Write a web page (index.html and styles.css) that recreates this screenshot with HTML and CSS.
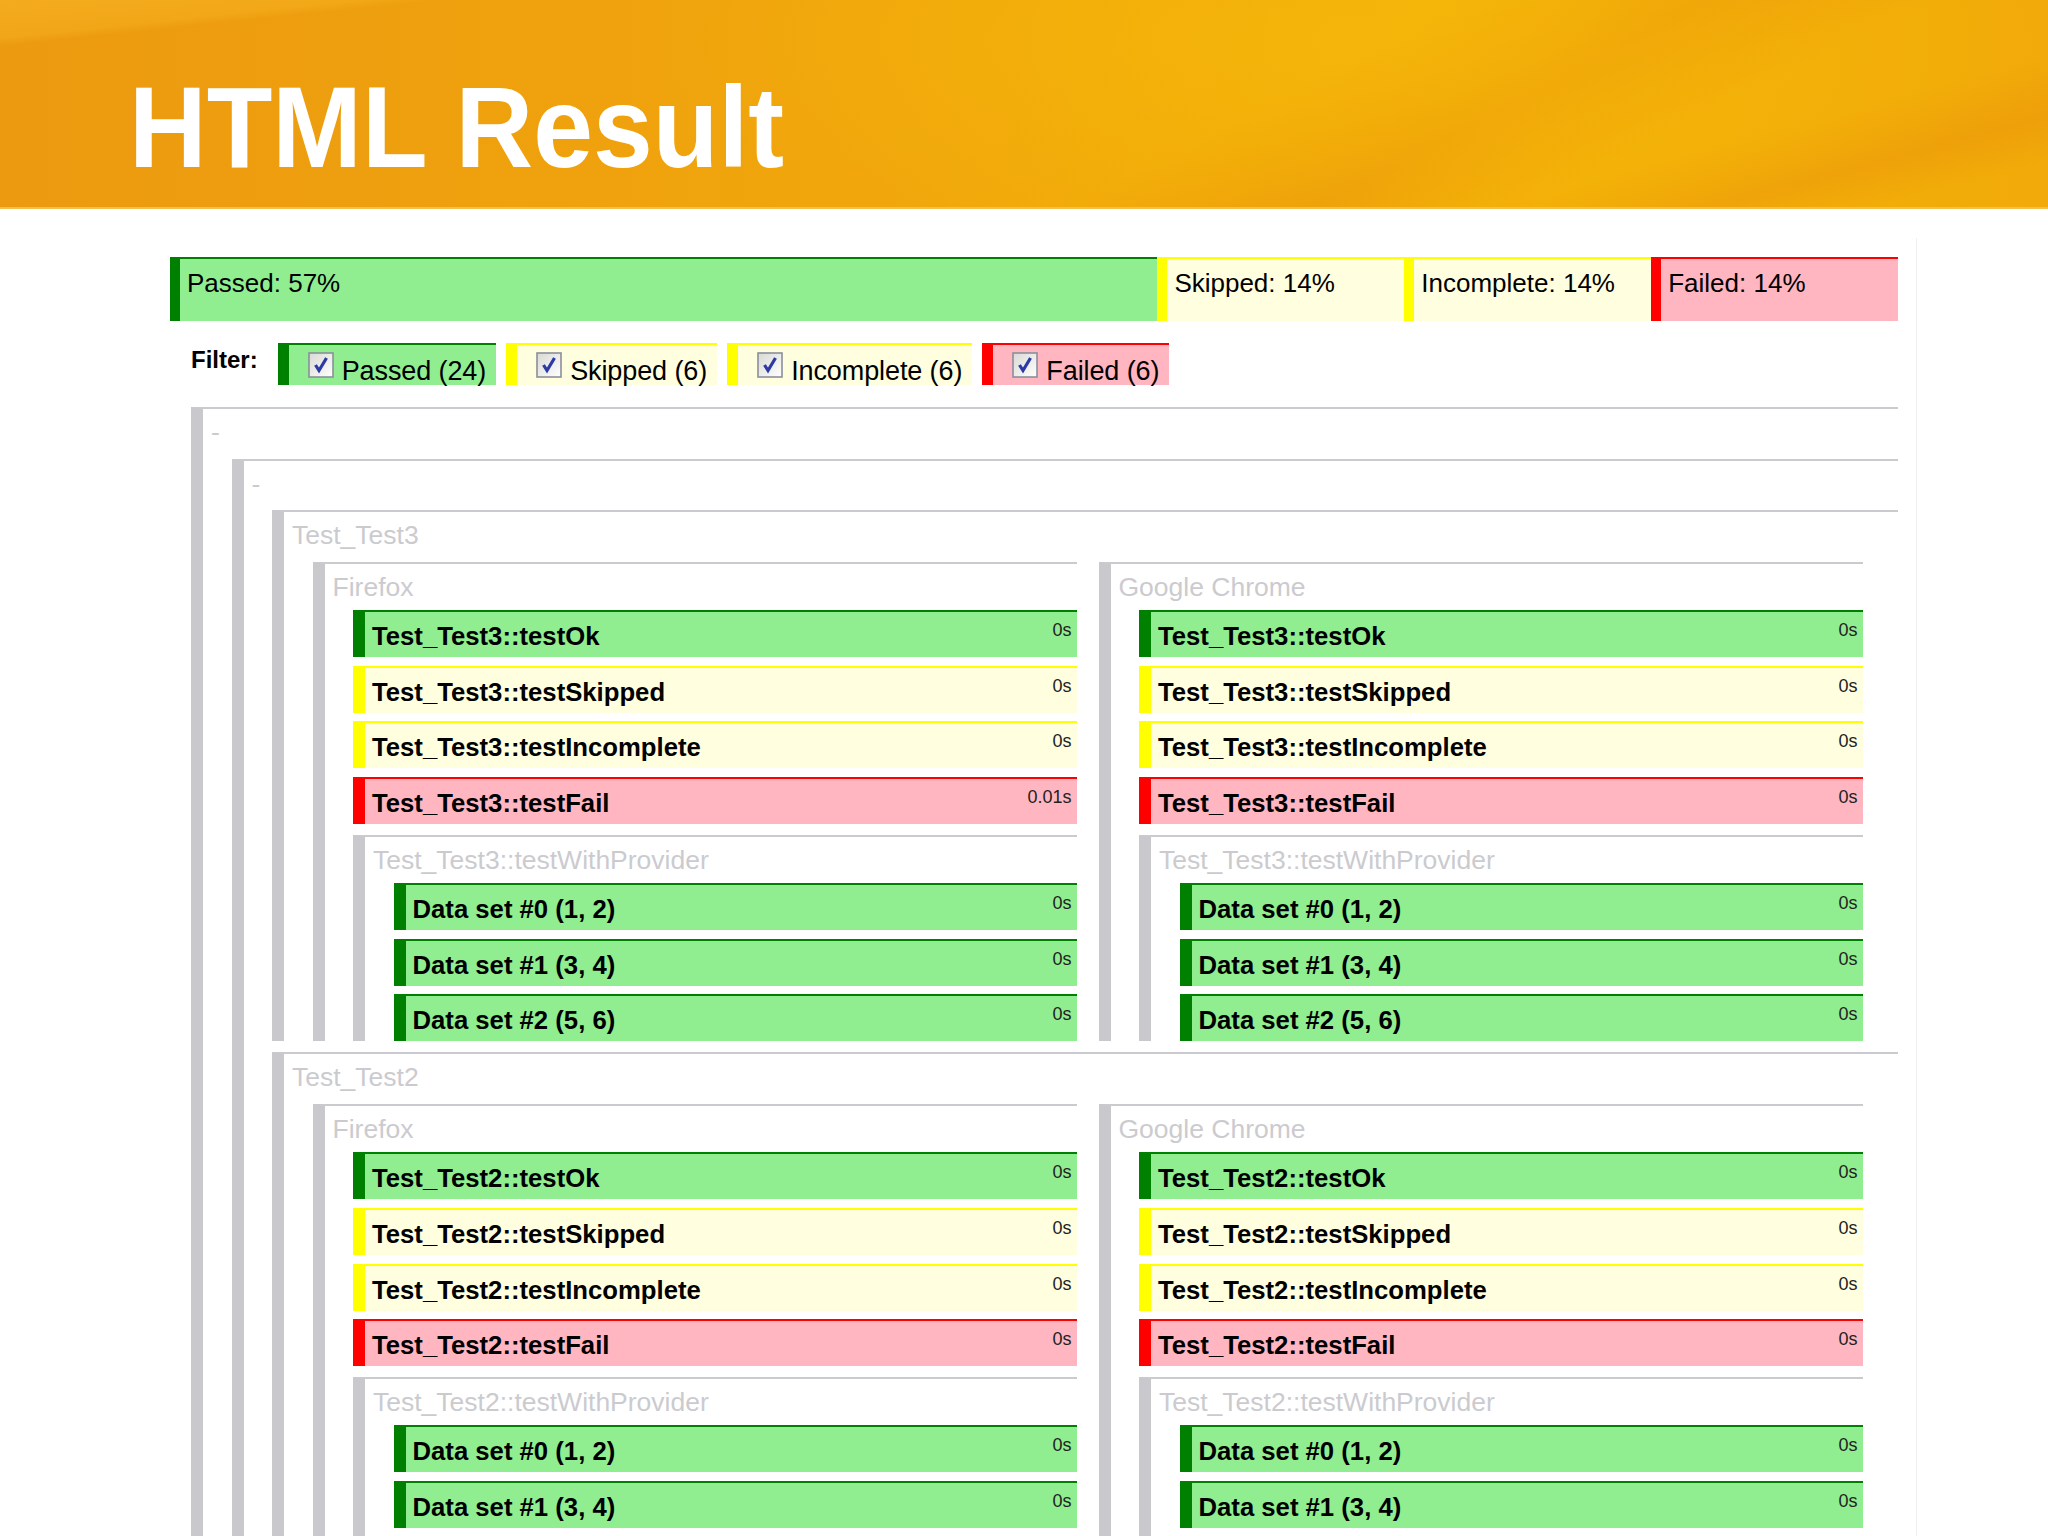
FILE: index.html
```html
<!DOCTYPE html>
<html lang="en">
<head>
<meta charset="utf-8">
<title>HTML Result</title>
<link rel="stylesheet" href="styles.css">
</head>
<body>
<header class="banner">
  <h1 class="banner-title">HTML Result</h1>
</header>
<main class="panel">
  <div class="summary">
    <div class="seg seg-passed" style="width:57.14%">Passed: 57%</div>
    <div class="seg seg-skipped" style="width:14.29%">Skipped: 14%</div>
    <div class="seg seg-skipped" style="width:14.29%">Incomplete: 14%</div>
    <div class="seg seg-failed" style="width:14.28%">Failed: 14%</div>
  </div>

  <div class="filter">
    <span class="filter-label">Filter:</span>
    <label class="chip chip-passed">
      <svg class="box" viewBox="0 0 26 26"><defs><linearGradient id="cbg" x1="0" y1="0" x2="1" y2="1"><stop offset="0" stop-color="#d8d8d4"/><stop offset="1" stop-color="#ffffff"/></linearGradient></defs><rect x="1" y="1" width="24" height="24" fill="url(#cbg)" stroke="#8b8f9a" stroke-width="1.6"/><path d="M7.5 13 L11 18.5 L18.5 6" fill="none" stroke="#2c3aa6" stroke-width="3.2"/></svg>
      <span class="chip-text">Passed (24)</span>
    </label>
    <label class="chip chip-skipped">
      <svg class="box" viewBox="0 0 26 26"><rect x="1" y="1" width="24" height="24" fill="url(#cbg)" stroke="#8b8f9a" stroke-width="1.6"/><path d="M7.5 13 L11 18.5 L18.5 6" fill="none" stroke="#2c3aa6" stroke-width="3.2"/></svg>
      <span class="chip-text">Skipped (6)</span>
    </label>
    <label class="chip chip-skipped">
      <svg class="box" viewBox="0 0 26 26"><rect x="1" y="1" width="24" height="24" fill="url(#cbg)" stroke="#8b8f9a" stroke-width="1.6"/><path d="M7.5 13 L11 18.5 L18.5 6" fill="none" stroke="#2c3aa6" stroke-width="3.2"/></svg>
      <span class="chip-text">Incomplete (6)</span>
    </label>
    <label class="chip chip-failed">
      <svg class="box" viewBox="0 0 26 26"><rect x="1" y="1" width="24" height="24" fill="url(#cbg)" stroke="#8b8f9a" stroke-width="1.6"/><path d="M7.5 13 L11 18.5 L18.5 6" fill="none" stroke="#2c3aa6" stroke-width="3.2"/></svg>
      <span class="chip-text">Failed (6)</span>
    </label>
  </div>

  <div class="tree">
    <div class="node">
      <div class="node-title">-</div>
      <div class="node">
        <div class="node-title">-</div>

        <div class="node suite">
          <div class="node-title">Test_Test3</div>
          <div class="browsers">
            <div class="node browser">
              <div class="node-title">Firefox</div>
              <div class="row row-passed"><span class="row-name">Test_Test3::testOk</span><span class="row-time">0s</span></div>
              <div class="row row-skipped"><span class="row-name">Test_Test3::testSkipped</span><span class="row-time">0s</span></div>
              <div class="row row-skipped"><span class="row-name">Test_Test3::testIncomplete</span><span class="row-time">0s</span></div>
              <div class="row row-failed"><span class="row-name">Test_Test3::testFail</span><span class="row-time">0.01s</span></div>
              <div class="node provider">
                <div class="node-title">Test_Test3::testWithProvider</div>
                <div class="row row-passed"><span class="row-name">Data set #0 (1, 2)</span><span class="row-time">0s</span></div>
                <div class="row row-passed"><span class="row-name">Data set #1 (3, 4)</span><span class="row-time">0s</span></div>
                <div class="row row-passed"><span class="row-name">Data set #2 (5, 6)</span><span class="row-time">0s</span></div>
              </div>
            </div>
            <div class="node browser">
              <div class="node-title">Google Chrome</div>
              <div class="row row-passed"><span class="row-name">Test_Test3::testOk</span><span class="row-time">0s</span></div>
              <div class="row row-skipped"><span class="row-name">Test_Test3::testSkipped</span><span class="row-time">0s</span></div>
              <div class="row row-skipped"><span class="row-name">Test_Test3::testIncomplete</span><span class="row-time">0s</span></div>
              <div class="row row-failed"><span class="row-name">Test_Test3::testFail</span><span class="row-time">0s</span></div>
              <div class="node provider">
                <div class="node-title">Test_Test3::testWithProvider</div>
                <div class="row row-passed"><span class="row-name">Data set #0 (1, 2)</span><span class="row-time">0s</span></div>
                <div class="row row-passed"><span class="row-name">Data set #1 (3, 4)</span><span class="row-time">0s</span></div>
                <div class="row row-passed"><span class="row-name">Data set #2 (5, 6)</span><span class="row-time">0s</span></div>
              </div>
            </div>
          </div>
        </div>

        <div class="node suite">
          <div class="node-title">Test_Test2</div>
          <div class="browsers">
            <div class="node browser">
              <div class="node-title">Firefox</div>
              <div class="row row-passed"><span class="row-name">Test_Test2::testOk</span><span class="row-time">0s</span></div>
              <div class="row row-skipped"><span class="row-name">Test_Test2::testSkipped</span><span class="row-time">0s</span></div>
              <div class="row row-skipped"><span class="row-name">Test_Test2::testIncomplete</span><span class="row-time">0s</span></div>
              <div class="row row-failed"><span class="row-name">Test_Test2::testFail</span><span class="row-time">0s</span></div>
              <div class="node provider provider-tail">
                <div class="node-title">Test_Test2::testWithProvider</div>
                <div class="row row-passed"><span class="row-name">Data set #0 (1, 2)</span><span class="row-time">0s</span></div>
                <div class="row row-passed"><span class="row-name">Data set #1 (3, 4)</span><span class="row-time">0s</span></div>
              </div>
            </div>
            <div class="node browser">
              <div class="node-title">Google Chrome</div>
              <div class="row row-passed"><span class="row-name">Test_Test2::testOk</span><span class="row-time">0s</span></div>
              <div class="row row-skipped"><span class="row-name">Test_Test2::testSkipped</span><span class="row-time">0s</span></div>
              <div class="row row-skipped"><span class="row-name">Test_Test2::testIncomplete</span><span class="row-time">0s</span></div>
              <div class="row row-failed"><span class="row-name">Test_Test2::testFail</span><span class="row-time">0s</span></div>
              <div class="node provider provider-tail">
                <div class="node-title">Test_Test2::testWithProvider</div>
                <div class="row row-passed"><span class="row-name">Data set #0 (1, 2)</span><span class="row-time">0s</span></div>
                <div class="row row-passed"><span class="row-name">Data set #1 (3, 4)</span><span class="row-time">0s</span></div>
              </div>
            </div>
          </div>
        </div>

      </div>
    </div>
  </div>
</main>
</body>
</html>
```

FILE: styles.css
```css
html, body {
  margin: 0;
  padding: 0;
  background: #ffffff;
  overflow: hidden;
}

body {
  width: 2048px;
  height: 1536px;
  font-family: "Liberation Sans", Arial, sans-serif;
  color: #000;
}

/* ---------- banner ---------- */
.banner {
  box-sizing: border-box;
  height: 209px;
  padding: 70px 0 0 129px;
  border-bottom: 2px solid #f3bf4e;
  background:
    linear-gradient(174deg, rgba(250, 186, 40, 0.55) 0%, rgba(250, 186, 40, 0.35) 9%, rgba(0, 0, 0, 0) 11%),
    radial-gradient(ellipse 1000px 300px at 1350px 40px, rgba(246, 186, 10, 0.55), rgba(246, 186, 10, 0) 70%),
    linear-gradient(152deg, rgba(0, 0, 0, 0) 60%, rgba(226, 128, 12, 0.32) 70%, rgba(0, 0, 0, 0) 79%),
    linear-gradient(165deg, rgba(0, 0, 0, 0) 80%, rgba(226, 128, 12, 0.25) 88%, rgba(0, 0, 0, 0) 94%),
    linear-gradient(90deg, #ec9a10 0%, #efa20d 30%, #f2ac09 58%, #f4b207 75%, #f1aa09 100%);
}

.banner-title {
  margin: 0;
  font-size: 115px;
  line-height: 115px;
  font-weight: 700;
  color: #ffffff;
  white-space: nowrap;
  transform: scaleX(0.935);
  transform-origin: 0 0;
}

/* ---------- panel ---------- */
.panel {
  box-sizing: border-box;
  display: block;
  width: 1767px;
  height: 1298px;
  margin: 29px 0 0 150px;
  padding-top: 19px;
  border-right: 1px solid #f1f1f1;
}

/* ---------- summary bar ---------- */
.summary {
  display: flex;
  width: 1728px;
  height: 64px;
  margin-left: 20px;
}

.seg {
  box-sizing: border-box;
  height: 64px;
  border-top: 2px solid;
  border-left: 10px solid;
  padding: 9px 0 0 7px;
  font-size: 26px;
  line-height: 30px;
  white-space: nowrap;
}

.seg-passed { background: #90ee90; border-color: #008000; }
.seg-skipped { background: #ffffe0; border-color: #ffff00; }
.seg-failed { background: #ffb6c1; border-color: #ff0000; }

/* ---------- filter ---------- */
.filter {
  display: flex;
  align-items: flex-start;
  margin: 22px 0 0 41px;
}

.filter-label {
  font-size: 24px;
  font-weight: 700;
  line-height: 28px;
  padding-top: 3px;
  margin-right: 20px;
}

.chip {
  box-sizing: border-box;
  display: flex;
  align-items: flex-start;
  height: 42px;
  border-top: 2px solid;
  border-left: 11px solid;
  padding: 0 10px 0 19px;
  margin-right: 10px;
  font-size: 27px;
  line-height: 30px;
  letter-spacing: -0.1px;
  white-space: nowrap;
}

.chip .box {
  flex: none;
  width: 26px;
  height: 26px;
  margin: 7px 8px 0 0;
}

.chip-text { padding-top: 11px; }

.chip-passed { background: #90ee90; border-color: #008000; }
.chip-skipped { background: #ffffe0; border-color: #ffff00; }
.chip-failed { background: #ffb6c1; border-color: #ff0000; }

/* ---------- tree ---------- */
.tree {
  width: 1707px;
  margin: 22px 0 0 41px;
}

.node {
  box-sizing: border-box;
  border-top: 2px solid #cbcbcf;
  border-left: 12px solid #c9c9cd;
  padding-left: 8px;
}

.node > .node,
.node > .browsers,
.node > .row {
  margin-left: 20.5px;
}

.node-title {
  height: 46px;
  box-sizing: border-box;
  padding-top: 8px;
  font-size: 26.5px;
  line-height: 30px;
  color: #cbcbcf;
  white-space: nowrap;
}

.node-title + .node { margin-top: 3.5px; }
.node-title + .browsers { margin-top: 4px; }
.row + .node { margin-top: 11px; }
.suite + .suite { margin-top: 11px; }
.provider-tail { padding-bottom: 40px; }

.browsers {
  display: flex;
  gap: 22px;
}

.browsers > .browser {
  flex: none;
  width: 764px;
}

/* ---------- rows ---------- */
.row {
  box-sizing: border-box;
  display: flex;
  justify-content: space-between;
  align-items: flex-start;
  height: 47px;
  border-top: 2px solid;
  border-left: 12px solid;
}

.row + .row { margin-top: 8.67px; }

.row-name {
  padding: 9px 0 0 7px;
  font-size: 25.7px;
  font-weight: 700;
  line-height: 30px;
  white-space: nowrap;
}

.row-time {
  padding: 8px 5px 0 0;
  font-size: 18px;
  line-height: 20px;
  color: #222;
}

.row-passed { background: #90ee90; border-color: #008000; }
.row-skipped { background: #ffffe0; border-color: #ffff00; }
.row-failed { background: #ffb6c1; border-color: #ff0000; }
```
